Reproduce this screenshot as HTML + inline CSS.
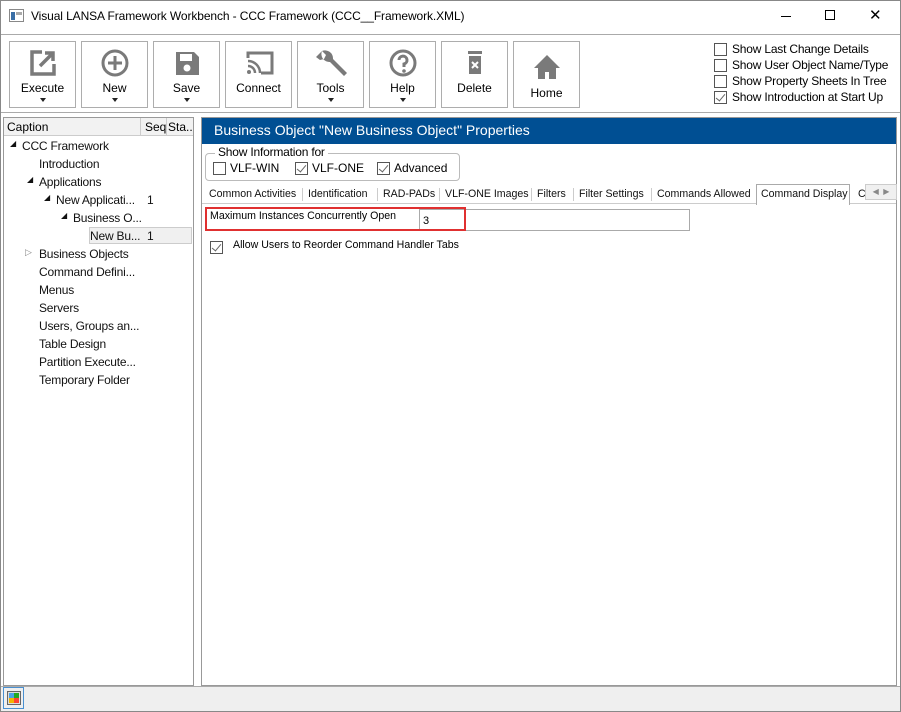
<!DOCTYPE html>
<html><head><style>
*{margin:0;padding:0;box-sizing:border-box}
body{width:901px;height:712px;background:#fff;font-family:"Liberation Sans",sans-serif;font-size:12px;color:#000;position:relative;overflow:hidden}
.a{position:absolute}
.win{left:0;top:0;width:901px;height:712px;border:1px solid #888}
.btn{top:41px;width:67px;height:67px;border:1px solid #adadad;background:#fff;text-align:center;font-size:12px}
.btn svg{position:absolute;left:18px;top:6px}
.btn .l{position:absolute;left:0;right:0;top:39px}
.btn .dd{position:absolute;left:30px;top:56px;width:0;height:0;border-left:3px solid transparent;border-right:3px solid transparent;border-top:4px solid #222}
.cb{width:13px;height:13px;border:1px solid #555;background:#fff}
.ck::after{content:"";position:absolute;left:3px;top:0px;width:4px;height:8px;border:solid #666;border-width:0 1.5px 1.5px 0;transform:rotate(40deg)}
.tr{font-size:12px;color:#111;letter-spacing:-0.2px}
.tab{top:186px;font-size:10.6px;height:17px;line-height:17px;color:#111}
</style></head><body>
<div class="a win"></div>
<svg class="a" style="left:9px;top:9px" width="15" height="13"><rect x="0.5" y="0.5" width="14" height="12" fill="#fff" stroke="#888"/><rect x="2" y="3" width="4" height="8" fill="#3a6ea5"/><rect x="7" y="3" width="6" height="3" fill="#aaa"/></svg>
<div class="a" style="left:31px;top:9px;font-size:12px;letter-spacing:-0.1px">Visual LANSA Framework Workbench - CCC Framework (CCC__Framework.XML)</div>
<div class="a" style="left:781px;top:16px;width:10px;height:1px;background:#000"></div>
<div class="a" style="left:825px;top:10px;width:10px;height:10px;border:1px solid #000"></div>
<div class="a" style="left:869px;top:6px;font-size:15px">✕</div>
<div class="a" style="left:1px;top:34px;width:899px;height:1px;background:#aaa"></div>

<div class="a btn" style="left:9px"><svg width="30" height="30" viewBox="0 0 30 30"><path d="M14 4H4v22h22V16" fill="none" stroke="#7a7a7a" stroke-width="3.5"/><path d="M12 18L25 5M17 5h8v8" fill="none" stroke="#7a7a7a" stroke-width="3.5"/></svg><div class="l">Execute</div><div class="dd"></div></div>
<div class="a btn" style="left:81px"><svg width="30" height="30" viewBox="0 0 30 30"><circle cx="15" cy="15" r="12" fill="none" stroke="#7a7a7a" stroke-width="3"/><path d="M15 8v14M8 15h14" stroke="#7a7a7a" stroke-width="3"/></svg><div class="l">New</div><div class="dd"></div></div>
<div class="a btn" style="left:153px"><svg width="30" height="30" viewBox="0 0 30 30"><path d="M4 4h18l5 5v18H4z" fill="#7a7a7a"/><rect x="8" y="6" width="12" height="7" fill="#fff"/><circle cx="15" cy="20" r="3.5" fill="#fff"/></svg><div class="l">Save</div><div class="dd"></div></div>
<div class="a btn" style="left:225px"><svg width="32" height="30" viewBox="0 0 32 30"><path d="M4 10V5h24v20H17" fill="none" stroke="#7a7a7a" stroke-width="3"/><path d="M4 13a12 12 0 0 1 12 12M4 18a7 7 0 0 1 7 7" fill="none" stroke="#7a7a7a" stroke-width="2.5"/><circle cx="5" cy="24" r="2" fill="#7a7a7a"/></svg><div class="l">Connect</div></div>
<div class="a btn" style="left:297px"><svg width="32" height="32" viewBox="0 0 32 32"><path d="M6 3a8 8 0 0 0 8 11l14 14 3-3-14-14A8 8 0 0 0 6 3l4 4-2 4-4 1-4-3" fill="#7a7a7a"/></svg><div class="l">Tools</div><div class="dd"></div></div>
<div class="a btn" style="left:369px"><svg width="30" height="30" viewBox="0 0 30 30"><circle cx="15" cy="15" r="12" fill="none" stroke="#7a7a7a" stroke-width="3"/><path d="M11 12a4 4 0 1 1 5 4v3" fill="none" stroke="#7a7a7a" stroke-width="3"/><circle cx="16" cy="23" r="1.8" fill="#7a7a7a"/></svg><div class="l">Help</div><div class="dd"></div></div>
<div class="a btn" style="left:441px"><svg width="30" height="30" viewBox="0 0 30 30"><rect x="8" y="3" width="14" height="3" fill="#7a7a7a"/><path d="M9 8h12v18H9z" fill="#7a7a7a"/><path d="M12 14l6 6M18 14l-6 6" stroke="#fff" stroke-width="2"/></svg><div class="l">Delete</div></div>
<div class="a btn" style="left:513px"><svg width="30" height="30" viewBox="0 0 30 30" style="top:10px"><path d="M15 3L2 16h4v11h7v-7h4v7h7V16h4z" fill="#7a7a7a"/></svg><div class="l" style="top:44px">Home</div></div>

<div class="a cb" style="left:714px;top:43px"></div><div class="a" style="left:732px;top:42px;letter-spacing:-0.2px">Show Last Change Details</div>
<div class="a cb" style="left:714px;top:59px"></div><div class="a" style="left:732px;top:58px;letter-spacing:-0.2px">Show User Object Name/Type</div>
<div class="a cb" style="left:714px;top:75px"></div><div class="a" style="left:732px;top:74px;letter-spacing:-0.2px">Show Property Sheets In Tree</div>
<div class="a cb ck" style="left:714px;top:91px"></div><div class="a" style="left:732px;top:90px;letter-spacing:-0.2px">Show Introduction at Start Up</div>
<div class="a" style="left:1px;top:112px;width:899px;height:1px;background:#aaa"></div>

<div class="a" style="left:3px;top:117px;width:191px;height:569px;border:1px solid #999"></div>
<div class="a" style="left:4px;top:118px;width:189px;height:18px;background:#f2f2f2;border-bottom:1px solid #ccc"></div>
<div class="a" style="left:140px;top:118px;width:1px;height:18px;background:#ccc"></div>
<div class="a" style="left:166px;top:118px;width:1px;height:18px;background:#ccc"></div>
<div class="a" style="left:7px;top:120px">Caption</div>
<div class="a" style="left:145px;top:120px">Seq</div>
<div class="a" style="left:168px;top:120px">Sta..</div>
<div class="a" style="left:89px;top:227px;width:103px;height:17px;background:#f0f0f0;border:1px solid #ccc"></div>
<div class="a tr" style="left:10px;top:139px;font-size:8px">◢</div><div class="a tr" style="left:22px;top:139px">CCC Framework</div>
<div class="a tr" style="left:39px;top:157px">Introduction</div>
<div class="a tr" style="left:27px;top:175px;font-size:8px">◢</div><div class="a tr" style="left:39px;top:175px">Applications</div>
<div class="a tr" style="left:44px;top:193px;font-size:8px">◢</div><div class="a tr" style="left:56px;top:193px">New Applicati...</div><div class="a tr" style="left:147px;top:193px">1</div>
<div class="a tr" style="left:61px;top:211px;font-size:8px">◢</div><div class="a tr" style="left:73px;top:211px">Business O...</div>
<div class="a tr" style="left:90px;top:229px">New Bu...</div><div class="a tr" style="left:147px;top:229px">1</div>
<div class="a tr" style="left:25px;top:247px;font-size:9px;color:#888">▷</div><div class="a tr" style="left:39px;top:247px">Business Objects</div>
<div class="a tr" style="left:39px;top:265px">Command Defini...</div>
<div class="a tr" style="left:39px;top:283px">Menus</div>
<div class="a tr" style="left:39px;top:301px">Servers</div>
<div class="a tr" style="left:39px;top:319px">Users, Groups an...</div>
<div class="a tr" style="left:39px;top:337px">Table Design</div>
<div class="a tr" style="left:39px;top:355px">Partition Execute...</div>
<div class="a tr" style="left:39px;top:373px">Temporary Folder</div>

<div class="a" style="left:201px;top:117px;width:696px;height:569px;border:1px solid #999"></div>
<div class="a" style="left:202px;top:118px;width:694px;height:26px;background:#004f93"></div>
<div class="a" style="left:214px;top:122px;color:#fff;font-size:14px">Business Object "New Business Object" Properties</div>
<div class="a" style="left:205px;top:153px;width:255px;height:28px;border:1px solid #bbb;border-radius:4px"></div>
<div class="a" style="left:215px;top:145px;background:#fff;padding:0 3px;letter-spacing:-0.2px">Show Information for</div>
<div class="a cb" style="left:213px;top:162px"></div><div class="a" style="left:230px;top:161px">VLF-WIN</div>
<div class="a cb ck" style="left:295px;top:162px"></div><div class="a" style="left:312px;top:161px">VLF-ONE</div>
<div class="a cb ck" style="left:377px;top:162px"></div><div class="a" style="left:394px;top:161px">Advanced</div>

<div class="a" style="left:202px;top:203px;width:694px;height:1px;background:#ccc"></div>
<div class="a tab" style="left:209px">Common Activities</div>
<div class="a" style="left:302px;top:188px;width:1px;height:13px;background:#ccc"></div>
<div class="a tab" style="left:308px">Identification</div>
<div class="a" style="left:377px;top:188px;width:1px;height:13px;background:#ccc"></div>
<div class="a tab" style="left:383px">RAD-PADs</div>
<div class="a" style="left:439px;top:188px;width:1px;height:13px;background:#ccc"></div>
<div class="a tab" style="left:445px">VLF-ONE Images</div>
<div class="a" style="left:531px;top:188px;width:1px;height:13px;background:#ccc"></div>
<div class="a tab" style="left:537px">Filters</div>
<div class="a" style="left:573px;top:188px;width:1px;height:13px;background:#ccc"></div>
<div class="a tab" style="left:579px">Filter Settings</div>
<div class="a" style="left:651px;top:188px;width:1px;height:13px;background:#ccc"></div>
<div class="a tab" style="left:657px">Commands Allowed</div>
<div class="a" style="left:756px;top:184px;width:94px;height:21px;background:#fff;border:1px solid #aaa;border-bottom:none"></div>
<div class="a tab" style="left:761px">Command Display</div>
<div class="a tab" style="left:858px">C</div>
<div class="a" style="left:865px;top:184px;width:32px;height:16px;background:#f0f0f0;border:1px solid #ccc;font-size:8px;color:#888;line-height:14px;text-align:center">◀ &nbsp;▶</div>

<div class="a" style="left:419px;top:209px;width:271px;height:22px;border:1px solid #aaa"></div>
<div class="a" style="left:205px;top:207px;width:261px;height:24px;border:2px solid #e03030"></div>
<div class="a" style="left:210px;top:210px;font-size:10.6px">Maximum Instances Concurrently Open</div>
<div class="a" style="left:423px;top:215px;font-size:11px">3</div>
<div class="a cb ck" style="left:210px;top:241px"></div><div class="a" style="left:233px;top:239px;font-size:10.6px">Allow Users to Reorder Command Handler Tabs</div>

<div class="a" style="left:1px;top:686px;width:899px;height:25px;background:#efefef;border-top:1px solid #aaa"></div>
<div class="a" style="left:3px;top:687px;width:21px;height:22px;border:1px solid #4a90d0"></div>
<svg class="a" style="left:7px;top:691px" width="14" height="14"><rect x="0.5" y="0.5" width="13" height="13" fill="#ddd" stroke="#666"/><rect x="2" y="2" width="5" height="5" fill="#4aa3e8"/><rect x="7" y="2" width="5" height="5" fill="#2a2"/><rect x="2" y="7" width="5" height="5" fill="#f4b400"/><rect x="7" y="7" width="5" height="5" fill="#f43"/></svg>
</body></html>
